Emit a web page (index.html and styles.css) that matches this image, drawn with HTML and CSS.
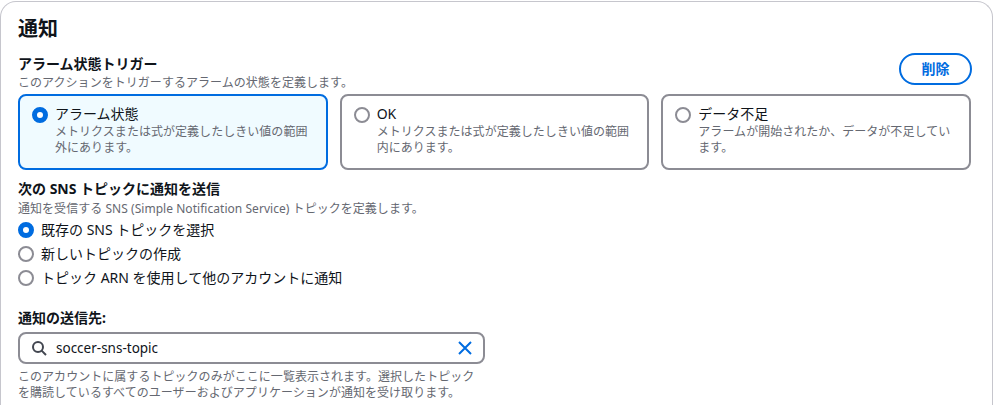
FILE: index.html
```html
<!DOCTYPE html>
<html lang="ja">
<head>
<meta charset="utf-8">
<title>通知</title>
<link rel="stylesheet" href="styles.css">
</head>
<body>
<main class="card">
  <h2 class="title">通知</h2>
  <section class="trigger">
    <div class="trigger-head">
      <div>
        <div class="label">アラーム状態トリガー</div>
        <div class="desc">このアクションをトリガーするアラームの状態を定義します。</div>
      </div>
      <button class="btn">削除</button>
    </div>
    <div class="tiles">
      <div class="tile tile-on">
        <span class="radio radio-on"></span>
        <div>
          <div class="opt">アラーム状態</div>
          <div class="desc">メトリクスまたは式が定義したしきい値の範囲外にあります。</div>
        </div>
      </div>
      <div class="tile">
        <span class="radio"></span>
        <div>
          <div class="opt">OK</div>
          <div class="desc">メトリクスまたは式が定義したしきい値の範囲内にあります。</div>
        </div>
      </div>
      <div class="tile">
        <span class="radio"></span>
        <div>
          <div class="opt">データ不足</div>
          <div class="desc">アラームが開始されたか、データが不足しています。</div>
        </div>
      </div>
    </div>
  </section>
  <section class="sns">
    <div class="label">次の SNS トピックに通知を送信</div>
    <div class="desc">通知を受信する SNS (Simple Notification Service) トピックを定義します。</div>
    <div class="radios">
      <div class="row"><span class="radio radio-on"></span><span class="opt">既存の SNS トピックを選択</span></div>
      <div class="row"><span class="radio"></span><span class="opt">新しいトピックの作成</span></div>
      <div class="row"><span class="radio"></span><span class="opt">トピック ARN を使用して他のアカウントに通知</span></div>
    </div>
  </section>
  <section class="target">
    <div class="label">通知の送信先:</div>
    <div class="search">
      <svg class="icon" width="16" height="16" viewBox="0 0 16 16" fill="none" stroke="#424650" stroke-width="2"><circle cx="7" cy="7" r="5"/><path d="M10.6 10.6 15 15"/></svg>
      <span class="value">soccer-sns-topic</span>
      <svg class="icon" width="16" height="16" viewBox="0 0 16 16" fill="none" stroke="#006ce0" stroke-width="2"><path d="M2 2l12 12M14 2 2 14"/></svg>
    </div>
    <div class="desc hint">このアカウントに属するトピックのみがここに一覧表示されます。選択したトピックを購読しているすべてのユーザーおよびアプリケーションが通知を受け取ります。</div>
  </section>
</main>
</body>
</html>
```
FILE: styles.css
```css
* { box-sizing: border-box; }
html, body { margin: 0; height: 405px; overflow: hidden; background: #fff; }
body {
  font-family: "Noto Sans", "Noto Sans CJK JP", sans-serif;
  color: #0f141a;
  font-size: 14px;
  line-height: 20px;
}
.card {
  width: 993px;
  margin-top: 1px;
  height: 404px;
  overflow: hidden;
  border: 1px solid #c6c6cd;
  border-bottom: 0;
  border-radius: 16px 16px 0 0;
  padding: 13px 20px 0 17px;
}
.title { margin: 0; font-size: 20px; line-height: 28px; font-weight: 700; }
.trigger { margin-top: 11px; }
.trigger-head { display: flex; justify-content: space-between; align-items: flex-start; }
.label { font-size: 14px; line-height: 20px; font-weight: 700; }
.label + .desc { margin-top: 1px; }
.desc { font-size: 12px; line-height: 16px; color: #656871; letter-spacing: 0.04px; }
.btn {
  width: 73px;
  height: 32px;
  margin-top: -1px;
  border: 2px solid #006ce0;
  border-radius: 20px;
  background: #fff;
  color: #006ce0;
  font: 700 14px/18px "Noto Sans", "Noto Sans CJK JP", sans-serif;
  padding: 0;
}
.tiles { display: grid; grid-template-columns: repeat(3, 1fr); gap: 12px; width: 953px; margin-top: 3px; }
.tile {
  display: flex;
  gap: 7px;
  height: 76px;
  padding: 9px 12px;
  border: 2px solid #8c8c94;
  border-radius: 8px;
}
.tile-on { border-color: #006ce0; background: #f0fbff; }
.radio {
  flex: none;
  width: 16px;
  height: 16px;
  margin-top: 2px;
  border: 2px solid #8c8c94;
  border-radius: 50%;
  background: #fff;
}
.radio-on { border: 5px solid #006ce0; }
.opt { font-size: 14px; line-height: 18px; }
.tile .opt { margin-bottom: 1px; }
.sns { margin-top: 9px; }
.sns .label + .desc { margin-top: 2px; }
.radios { display: flex; flex-direction: column; gap: 6px; margin-top: 4px; }
.row { display: flex; align-items: center; gap: 7px; }
.row .radio { margin-top: 0; }
.target { margin-top: 21px; }
.search {
  display: flex;
  align-items: center;
  gap: 9px;
  width: 467px;
  height: 32px;
  margin-top: 4px;
  padding: 0 10px 0 11px;
  border: 2px solid #8c8c94;
  border-radius: 8px;
}
.value { flex: 1; font-size: 13.5px; }
.hint { width: 462px; margin-top: 5px; }
```
